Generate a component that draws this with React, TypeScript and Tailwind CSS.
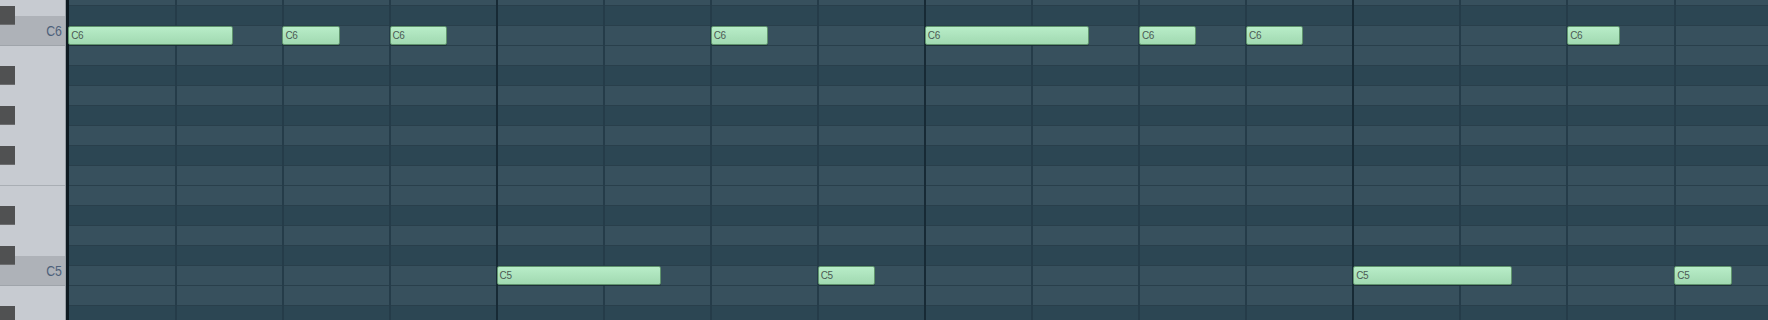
import React from 'react';

const BEAT = 107.07;
const ORIGIN = 68.3;

// rows from y=-15 downward: D6 .. A#4
const rows: ('w' | 'b')[] = ['w', 'b', 'w', 'w', 'b', 'w', 'b', 'w', 'b', 'w', 'w', 'b', 'w', 'b', 'w', 'w', 'b'];

const blackKeys = [6, 66, 106, 146, 206, 246, 306];

type Note = { beat: number; width: number; pitch: 'C6' | 'C5' };

const notes: Note[] = [
  { beat: 0, width: 165, pitch: 'C6' },
  { beat: 2, width: 57.4, pitch: 'C6' },
  { beat: 3, width: 57.4, pitch: 'C6' },
  { beat: 6, width: 57.4, pitch: 'C6' },
  { beat: 8, width: 164.4, pitch: 'C6' },
  { beat: 10, width: 57.4, pitch: 'C6' },
  { beat: 11, width: 57.4, pitch: 'C6' },
  { beat: 14, width: 52.6, pitch: 'C6' },
  { beat: 4, width: 164, pitch: 'C5' },
  { beat: 7, width: 57.4, pitch: 'C5' },
  { beat: 12, width: 159, pitch: 'C5' },
  { beat: 15, width: 57.4, pitch: 'C5' },
];

function KeyLabel({ name }: { name: string }) {
  return (
    <span className="origin-right scale-x-[0.82] pr-[4px] text-[15px] leading-none text-[#4d617a]">{name}</span>
  );
}

function Keyboard() {
  return (
    <div className="relative h-full w-[66px] shrink-0 border-r border-[#9aa0a6] bg-[#c7cbd1]">
      <div className="flex h-full flex-col">
        <div className="h-[16px] shrink-0" />
        <div className="flex h-[30px] shrink-0 items-center justify-end border-b border-[#9fa4aa] bg-[#aeb2b8]">
          <KeyLabel name="C6" />
        </div>
        <div className="h-[140px] shrink-0 border-b border-[#a9aeb4]" />
        <div className="h-[70px] shrink-0" />
        <div className="flex h-[30px] shrink-0 items-center justify-end border-b border-[#9fa4aa] bg-[#aeb2b8]">
          <KeyLabel name="C5" />
        </div>
        <div className="flex-1" />
      </div>
      {blackKeys.map((top) => (
        <div
          key={top}
          className="absolute left-0 h-[19px] w-[15px] border-b border-[#6c6d6f] bg-[#505152]"
          style={{ top }}
        />
      ))}
    </div>
  );
}

function Grid() {
  return (
    <div className="relative h-full flex-1 overflow-hidden">
      <div className="-mt-[15px] flex flex-col">
        {rows.map((r, i) => (
          <div
            key={i}
            className={`h-[20px] shrink-0 border-t border-[#293f4b] ${r === 'w' ? 'bg-[#37505d]' : 'bg-[#2c4653]'}`}
          />
        ))}
      </div>
      {/* beat / bar lines */}
      <div className="absolute inset-y-0 left-[-1.4px] flex">
        {Array.from({ length: 17 }).map((_, i) => (
          <div
            key={i}
            className={`h-full w-[107.07px] shrink-0 ${
              i === 0 ? '' : i % 4 === 0 ? 'border-l-2 border-[#172a35]' : 'border-l-2 border-[#253c49]'
            }`}
          />
        ))}
      </div>
    </div>
  );
}

export default function App() {
  return (
    <div className="relative flex h-[320px] w-[1768px] overflow-hidden bg-[#2c4653] font-['Liberation_Sans',Arial,sans-serif]">
      <Keyboard />
      <div className="h-full w-[3px] shrink-0 bg-[#0f1b22]" />
      <Grid />
      {notes.map((n, i) => (
        <div
          key={i}
          className="absolute flex h-[19px] items-center rounded-[2px] border border-[#5f936d] bg-gradient-to-b from-[#b8edc8] to-[#a1d9b1] pl-[2px] shadow-[0_1px_0_rgba(0,0,0,0.25)]"
          style={{
            left: ORIGIN + n.beat * BEAT,
            width: n.width,
            top: n.pitch === 'C6' ? 26 : 266,
          }}
        >
          <span className="text-[10px] leading-none tracking-[-0.4px] text-[#4c5a54]">{n.pitch}</span>
        </div>
      ))}
    </div>
  );
}
